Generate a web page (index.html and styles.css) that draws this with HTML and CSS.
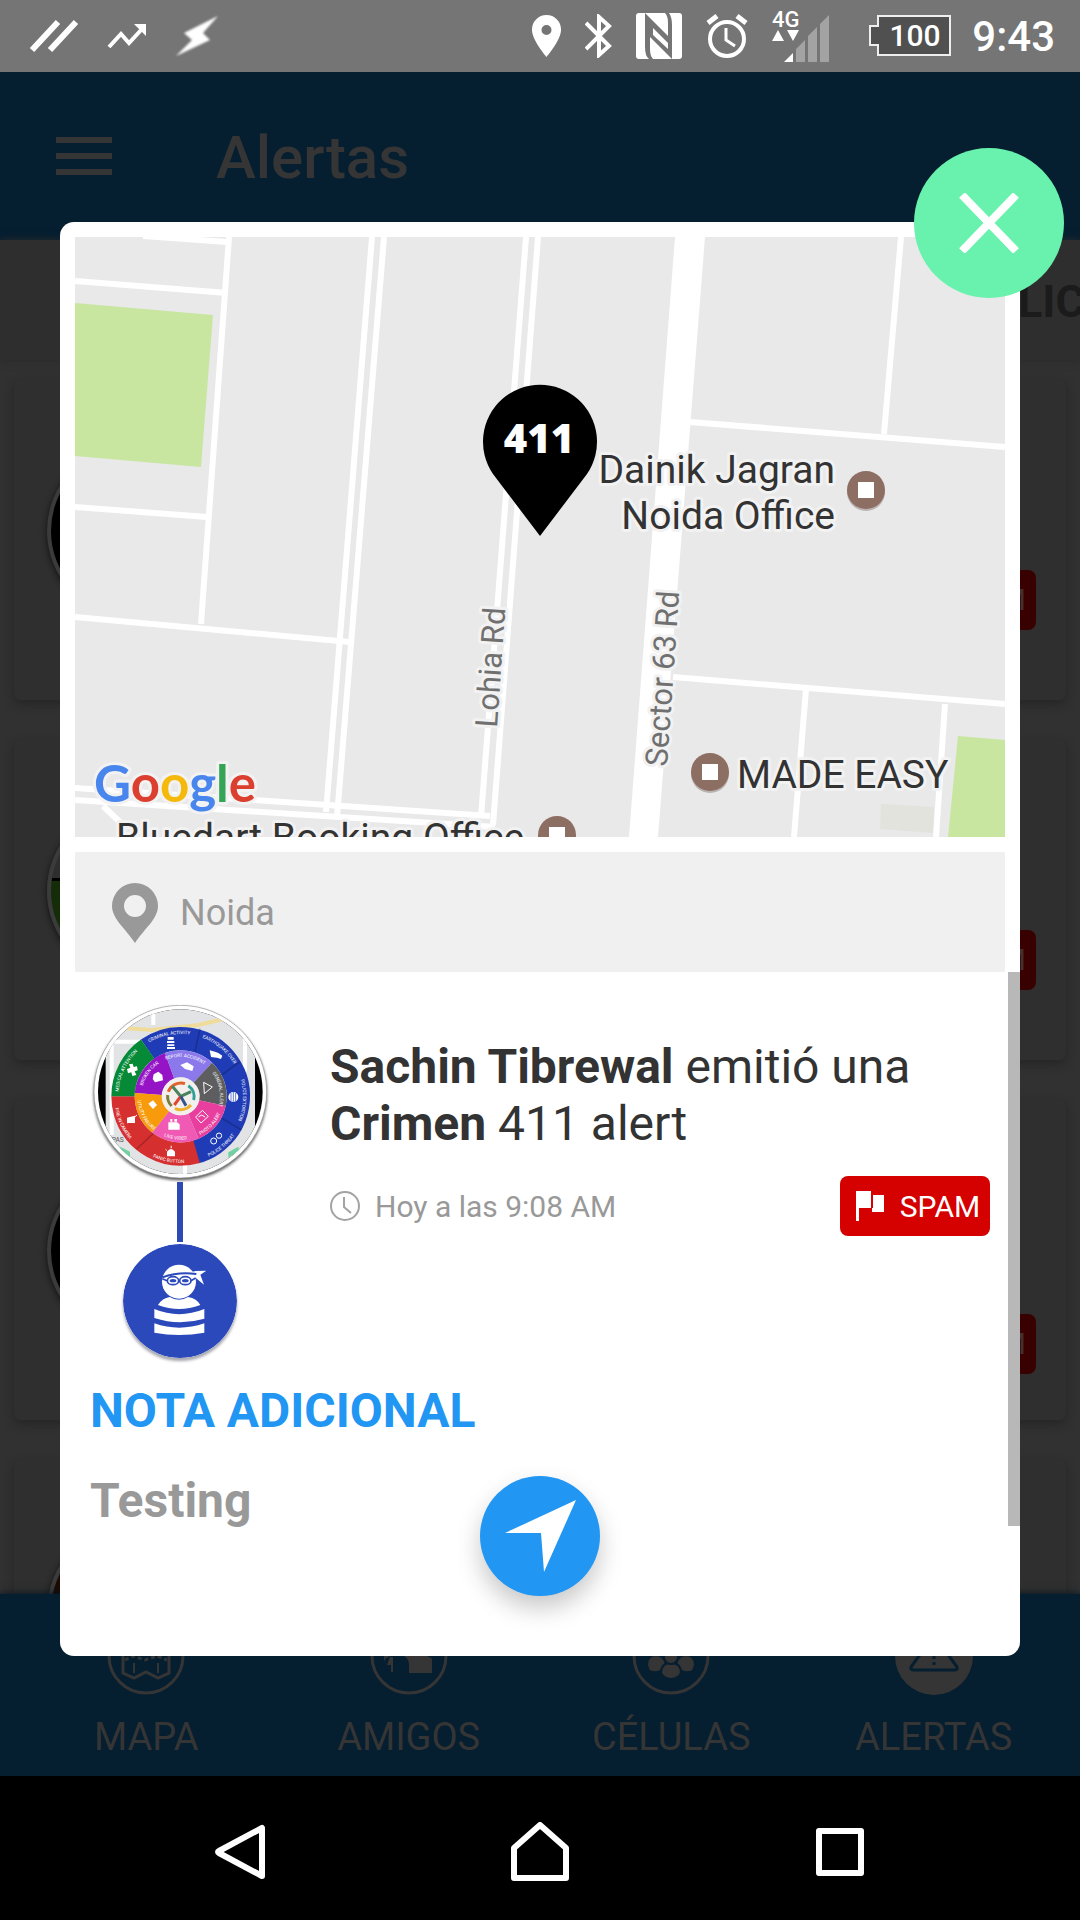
FILE: index.html
```html
<!DOCTYPE html>
<html lang="es">
<head>
<meta charset="utf-8">
<meta name="viewport" content="width=device-width, initial-scale=1">
<title>Alertas</title>
<link rel="stylesheet" href="styles.css">
</head>
<body>
<div class="screen">
  <div class="status">
    <div class="status-left">
      <svg width="50" height="34" viewBox="0 0 50 34" stroke="#fff" stroke-width="6"><path d="M3 31L29 3M21 31L47 3"/></svg>
      <svg width="40" height="26" viewBox="0 0 40 26"><path d="M2 24L14 11L22 20L35 6" fill="none" stroke="#fff" stroke-width="4"/><path d="M27 1H39V13Z" fill="#fff"/></svg>
      <svg class="bolt" width="44" height="42" viewBox="0 0 44 42"><path d="M43 1L28 18L35 25L1 41L17 25L9 18Z" fill="#fff"/></svg>
    </div>
    <div class="status-right">
      <svg width="29" height="42" viewBox="0 0 29 42"><path fill="#fff" fill-rule="evenodd" d="M14.500 0A14.500 14.500 0 0 0 0 15C0 25 14.500 42 14.500 42S29 25 29 15A14.500 14.500 0 0 0 14.500 0ZM14.500 10A5 5 0 1 1 14.500 20A5 5 0 1 1 14.500 10Z"/></svg>
      <svg width="27" height="44" viewBox="0 0 27 44"><path fill="none" stroke="#fff" stroke-width="4" d="M1 9L24 32L14 41V3L24 12L1 35"/></svg>
      <svg width="46" height="46" viewBox="0 0 46 46"><rect width="46" height="46" rx="3" fill="#fff"/><path fill="#757575" d="M9 0L32 23V10Q32 3 29 0H33Q36 4 36 12V46L14 24V36Q14 43 17 46H13Q9 43 9 34Z"/><path fill="#fff" d="M17 22L32 36V30L17 15Z"/></svg>
      <svg width="42" height="44" viewBox="0 0 42 44" fill="none" stroke="#fff"><circle cx="21" cy="25" r="17" stroke-width="4"/><path d="M2 9L11 2M40 9L31 2" stroke-width="5"/><path d="M20 14V26L29 32" stroke-width="3"/></svg>
      <svg width="58" height="54" viewBox="0 0 58 54"><text x="0" y="18" class="net">4G</text><path d="M0 32L6 21L12 32ZM15 21H27L21 32Z" fill="#fff"/><path d="M12 53L21 44V53Z" fill="#fff"/><path d="M24 53V40L33 31V53ZM36 53V27L45 18V53ZM48 53V15L57 6V53Z" fill="#a3a3a3"/></svg>
      <svg class="battery" width="82" height="42" viewBox="0 0 82 42"><path d="M9 1H81V40H9V30H1V11H9Z" fill="#505050" stroke="#eee" stroke-width="2"/><text x="46" y="31" text-anchor="middle" class="charge">100</text></svg>
      <span class="clock">9:43</span>
    </div>
  </div>

  <header class="appbar">
    <button class="menu" aria-label="Menú"><span></span><span></span><span></span></button>
    <h1>Alertas</h1>
  </header>
  <div class="tabs"><span class="tab">LIC</span></div>

  <main class="feed">
    <div class="card"><span class="disc"></span><span class="tag">SPAM</span></div>
    <div class="card"><span class="disc disc-green"></span><span class="tag">SPAM</span></div>
    <div class="card"><span class="disc"></span><span class="tag tag-low">SPAM</span></div>
    <div class="card"><span class="disc disc-brown"></span></div>
  </main>

  <nav class="bottomnav">
    <a href="#mapa">
      <svg width="78" height="78" viewBox="0 0 78 78" fill="none" stroke="#353535" stroke-width="3"><circle cx="39" cy="39" r="37"/><path d="M16 24L27 28L39 22L51 28L62 22V56L51 61L39 55L27 61L16 56Z"/><path d="M27 46V56M51 46V56" stroke-width="2"/><path d="M18 43L26 39L38 43L50 39L60 43" stroke-dasharray="4 3"/></svg>
      MAPA</a>
    <a href="#amigos">
      <svg width="78" height="78" viewBox="0 0 78 78"><circle cx="39" cy="39" r="37" fill="none" stroke="#353535" stroke-width="3"/><path fill="#353535" d="M14 44Q16 38 30 38Q39 39 39 48V56H62V42Q58 38 50 38L30 30L14 38ZM20 40H23V55H21V48H17Z"/></svg>
      AMIGOS</a>
    <a href="#celulas">
      <svg width="78" height="78" viewBox="0 0 78 78"><circle cx="39" cy="39" r="37" fill="none" stroke="#353535" stroke-width="3"/><g fill="#353535" stroke="#051e30" stroke-width="2"><path d="M15 48Q15 38 25 38Q34 40 34 50Q26 58 17 54ZM63 48Q63 38 53 38Q44 40 44 50Q52 58 61 54Z"/><path d="M29 56Q29 46 39 46Q49 46 49 56Q46 62 39 62Q32 62 29 56Z"/><circle cx="39" cy="40" r="7"/></g></svg>
      CÉLULAS</a>
    <a href="#alertas">
      <svg width="78" height="78" viewBox="0 0 78 78"><circle cx="39" cy="39" r="39" fill="#353535"/><path d="M39 18L62 50Q63 53 59 53H19Q15 53 16 50Z" fill="none" stroke="#051e30" stroke-width="3"/><path d="M39 28V42M39 45V48" stroke="#051e30" stroke-width="3"/></svg>
      ALERTAS</a>
  </nav>

  <div class="sysnav">
    <button aria-label="Atrás"><svg width="60" height="60" viewBox="0 0 60 60"><path d="M52 6V54L9 31Q7 30 9 29Z"/></svg></button>
    <button aria-label="Inicio"><svg width="60" height="60" viewBox="0 0 60 60"><path d="M4 56V26L30 3L56 26V56Z"/></svg></button>
    <button aria-label="Recientes"><svg width="60" height="60" viewBox="0 0 60 60"><path d="M9 9H51V51H9Z"/></svg></button>
  </div>

  <div class="overlay">
    <section class="dialog" role="dialog" aria-label="Detalle de la alerta">
      <button class="close" aria-label="Cerrar"><svg width="60" height="60" viewBox="0 0 60 60"><path d="M3 2L57 58M57 2L3 58" stroke="#fff" stroke-width="8"/></svg></button>

      <svg class="map" viewBox="0 0 930 600" preserveAspectRatio="xMidYMid slice" role="img" aria-label="Mapa de Noida">
        <rect width="930" height="600" fill="#e9e9e9"/>
        <g fill="#c8e6a0"><path d="M0 66L138 78L126 230L0 219ZM883 499L930 503V600H873Z"/></g>
        <path d="M806 567L859 570L858 596L805 592Z" fill="#e2e3dc"/>
        <path d="M600 0H630L583 600H554Z" fill="#fff"/>
        <g class="roads">
          <path d="M154 0L126 387M68 -1L152 5M0 44L152 56M0 270L132 280M0 380L275 405"/>
          <path d="M297 0L251 575M309 0L262 580M451 0L406 580M463 0L418 588"/>
          <path d="M0 551L415 579M0 563L420 590M28 569L48 588"/>
          <path d="M615 185L930 210M826 0L809 197M598 440L930 467M731 452L719 600M870 467L861 600"/>
        </g>
        <g class="road-name">
          <text transform="translate(422 491) rotate(-86)">Lohia Rd</text>
          <text transform="translate(592 530) rotate(-86)">Sector 63 Rd</text>
        </g>
        <g class="place">
          <text x="760" y="246" text-anchor="end">Dainik Jagran</text>
          <text x="760" y="292" text-anchor="end">Noida Office</text>
          <text x="662" y="551">MADE EASY</text>
          <text x="41" y="614">Bluedart Booking Office</text>
        </g>
        <g fill="#b9b4b2"><circle cx="791" cy="255" r="19"/><circle cx="635" cy="537" r="19"/></g>
        <g fill="#8d6e63"><circle cx="791" cy="253" r="19"/><circle cx="635" cy="535" r="19"/><circle cx="482" cy="598" r="19"/></g>
        <path d="M783 245h16v16h-16zM627 527h16v16h-16zM474 590h16v16h-16z" fill="#fff"/>
        <path d="M465 299L418 237A57 57 0 1 1 512 237Z" fill="#000"/>
        <text x="464" y="216" text-anchor="middle" class="pin-label">411</text>
        <text x="19" y="565" class="brand"><tspan fill="#4885ed">G</tspan><tspan fill="#db3f2f">o</tspan><tspan fill="#f4b90b">o</tspan><tspan fill="#4885ed">g</tspan><tspan fill="#35a555">l</tspan><tspan fill="#db3f2f">e</tspan></text>
      </svg>

      <div class="place-bar">
        <svg width="46" height="60" viewBox="0 0 46 60"><path fill="#999" fill-rule="evenodd" d="M23 0A23 23 0 0 0 0 23C0 36 14 46 23 60C32 46 46 36 46 23A23 23 0 0 0 23 0ZM23 12A11 11 0 1 1 23 34A11 11 0 1 1 23 12Z"/></svg>
        <span>Noida</span>
      </div>

      <div class="detail">
        <div class="alert">
          <div class="people">
            <svg class="avatar" width="190" height="187" viewBox="0 0 570 561">
              <defs>
                <clipPath id="photo"><circle cx="286" cy="290" r="247"/></clipPath>
                <path id="cwOuter" d="M100 304A187 187 0 1 1 474 304A187 187 0 1 1 100 304"/>
                <path id="ccOuter" d="M87 304A200 200 0 1 0 487 304A200 200 0 1 0 87 304"/>
                <path id="cwInner" d="M169 304A118 118 0 1 1 405 304A118 118 0 1 1 169 304"/>
                <path id="ccInner" d="M157 304A130 130 0 1 0 417 304A130 130 0 1 0 157 304"/>
              </defs>
              <circle class="avatar-ring" cx="286" cy="290" r="259"/>
              <g clip-path="url(#photo)">
                <rect width="570" height="561"/>
                <rect x="62" width="448" height="561" fill="#e2e3e5"/>
                <path d="M62 95L200 105L340 90L510 50" fill="none" stroke="#f0dc9a" stroke-width="12"/>
                <path d="M205 30V90M62 140H190M80 140V420M480 100V230M300 510V561" fill="none" stroke="#fff" stroke-width="12"/>
                <path d="M105 455L135 470V490L108 470ZM460 455L430 472V488L462 468Z" fill="#6fd0a0"/>
                <text x="80" y="440" class="town">PAS</text>
              </g>
              <g fill="none" stroke-width="70">
                <circle cx="287" cy="304" r="173" pathLength="360" stroke="#1f3cb6" stroke-dasharray="200 360" transform="rotate(235 287 304)"/>
                <circle cx="287" cy="304" r="173" pathLength="360" stroke="#d52f30" stroke-dasharray="106 360" transform="rotate(74 287 304)"/>
                <circle cx="287" cy="304" r="173" pathLength="360" stroke="#068a38" stroke-dasharray="55 360" transform="rotate(180 287 304)"/>
              </g>
              <g fill="none" stroke-width="82">
                <circle cx="287" cy="304" r="97" pathLength="360" stroke="#9414c6" stroke-dasharray="66 360" transform="rotate(184 287 304)"/>
                <circle cx="287" cy="304" r="97" pathLength="360" stroke="#8b79ec" stroke-dasharray="63 360" transform="rotate(250 287 304)"/>
                <circle cx="287" cy="304" r="97" pathLength="360" stroke="#5e5e60" stroke-dasharray="59 360" transform="rotate(313 287 304)"/>
                <circle cx="287" cy="304" r="97" pathLength="360" stroke="#e83f9f" stroke-dasharray="55 360" transform="rotate(12 287 304)"/>
                <circle cx="287" cy="304" r="97" pathLength="360" stroke="#f05ab4" stroke-dasharray="61 360" transform="rotate(67 287 304)"/>
                <circle cx="287" cy="304" r="97" pathLength="360" stroke="#f79a0c" stroke-dasharray="56 360" transform="rotate(128 287 304)"/>
              </g>
              <path d="M330 170L345 100M410 240L465 200M410 370L470 405M205 415L155 462" stroke="#000" stroke-opacity=".2" stroke-width="5"/>
              <circle cx="287" cy="304" r="57" fill="#f3efec"/>
              <g fill="none" stroke-width="9"><path d="M250 290A40 40 0 0 1 300 266" stroke="#e0632e"/><path d="M310 272A40 40 0 0 1 326 315" stroke="#2f9f9a"/><path d="M318 330A40 40 0 0 1 270 340" stroke="#efb02b"/><path d="M260 333A40 40 0 0 1 248 300" stroke="#7a7f3a"/><path d="M287 304L262 274M287 304L318 290" stroke="#49845f"/><path d="M287 304L268 330" stroke="#e0472e"/><path d="M287 304L303 332" stroke="#34548a"/></g>
              <g class="wheel-text">
                <text><textPath href="#cwOuter" startOffset="7%">MEDICAL ATTENTION</textPath></text>
                <text><textPath href="#cwOuter" startOffset="22%">CRIMINAL ACTIVITY</textPath></text>
                <text><textPath href="#cwOuter" startOffset="36%">EARTHQUAKE OVER</textPath></text>
                <text><textPath href="#cwOuter" startOffset="51%">POLICE EXTORTION</textPath></text>
                <text><textPath href="#ccOuter" startOffset="36%">POLICE THREAT</textPath></text>
                <text><textPath href="#ccOuter" startOffset="22%">PANIC BUTTON</textPath></text>
                <text><textPath href="#ccOuter" startOffset="7%">FIRE IN CAMERA</textPath></text>
                <text><textPath href="#cwInner" startOffset="10%">BROKEN CAR</textPath></text>
                <text><textPath href="#cwInner" startOffset="27%">REPORT ACCIDENT</textPath></text>
                <text><textPath href="#cwInner" startOffset="47%">GENERAL ALERT</textPath></text>
                <text><textPath href="#ccInner" startOffset="38%">PHOTO ALERT</textPath></text>
                <text><textPath href="#ccInner" startOffset="23%">LIVE VIDEO</textPath></text>
                <text><textPath href="#ccInner" startOffset="8%">UTILITY FAILURE</textPath></text>
              </g>
              <g fill="#fff">
                <path d="M126 222L136 218L132 208L143 206L146 216L156 214L158 226L149 229L154 240L142 243L139 232L129 235Z"/>
                <path d="M248 126H266V134H248ZM246 138H268V144H246ZM247 148H268V153H247ZM246 156H270V162H246Z"/>
                <path d="M374 166L390 170L400 174L412 182L408 192L396 188L378 186Z"/>
                <circle cx="445" cy="306" r="15"/>
                <path d="M206 238L220 230L232 240L234 256L210 262L203 252Z"/>
                <path d="M286 210L306 202L326 214L322 228L300 222Z"/>
                <path d="M190 326L204 316L216 330L204 342Z"/>
                <path d="M250 382H276L284 388V404H250ZM256 372H262V380H256ZM268 372H276V380H268Z"/>
                <path d="M246 484H270V470Q258 454 246 470ZM257 452H260V460H257ZM240 460L246 466L244 468Z"/>
                <path d="M126 368L150 362V384H126Z"/>
              </g>
              <g fill="none" stroke="#fff" stroke-width="3"><path d="M356 262L382 276L358 296ZM332 366L352 346L370 364L348 384ZM340 366L350 360L360 366M128 384L156 360"/><circle cx="386" cy="438" r="9"/><circle cx="402" cy="422" r="8"/></g>
              <path d="M445 290V322M438 294V318M452 294V318" stroke="#1f3cb6" stroke-width="2"/>
            </svg>
            <span class="link"></span>
            <svg class="kind" width="114" height="114" viewBox="0 0 342 342">
              <circle cx="171" cy="171" r="171" fill="#2b49bb"/>
              <g fill="#fff"><circle cx="168" cy="113" r="51"/><path d="M205 84L218 81L250 80L232 92L243 122L214 98Z"/></g>
              <path d="M118 100Q168 82 220 90" fill="none" stroke="#2b49bb" stroke-width="6"/>
              <g fill="#fff" stroke="#2b49bb" stroke-width="5"><path d="M118 104L132 110M204 110L218 102"/><ellipse cx="150" cy="110" rx="17" ry="12"/><ellipse cx="187" cy="110" rx="17" ry="12"/></g>
              <g fill="#2b49bb"><ellipse cx="150" cy="110" rx="10" ry="5"/><ellipse cx="187" cy="110" rx="10" ry="5"/></g>
              <path fill="#fff" d="M105 183Q118 162 140 159Q168 176 195 159Q222 164 232 183Q168 207 105 183ZM94 195Q168 226 244 195V224Q168 246 94 222ZM94 238Q168 264 244 238V266Q168 280 94 266Z"/>
            </svg>
          </div>
          <div class="info">
            <p class="headline"><b>Sachin Tibrewal</b> emitió una <b>Crimen</b> 411 alert</p>
            <div class="meta">
              <svg width="30" height="30" viewBox="0 0 30 30" fill="none" stroke="#a3a3a3" stroke-width="2"><circle cx="15" cy="15" r="14"/><path d="M14 6V16L21 22"/></svg>
              <span>Hoy a las 9:08 AM</span>
              <button class="spam"><svg width="28" height="30" viewBox="0 0 28 30" fill="#fff"><path d="M0 0H15V17H3V30H0ZM17 4H28V21H16V17H17Z"/></svg>SPAM</button>
            </div>
          </div>
        </div>
        <h2>NOTA ADICIONAL</h2>
        <p class="note">Testing</p>
        <span class="thumb"></span>
      </div>
      <button class="go" aria-label="Ir a la ubicación"><svg width="120" height="120" viewBox="0 0 120 120"><path d="M96 24L25 57H61L64 96Z" fill="#fff"/></svg></button>
    </section>
  </div>
</div>
</body>
</html>
```
FILE: styles.css
```css
* { box-sizing: border-box; }

body {
  margin: 0;
  font-family: Roboto, "Noto Sans", sans-serif;
}

h1, h2, p { margin: 0; }

svg { display: block; flex-shrink: 0; }

button {
  border: 0;
  padding: 0;
  background: none;
  font-family: inherit;
}

.screen {
  position: relative;
  display: flex;
  flex-direction: column;
  height: 100vh;
  overflow: hidden;
  background: #313131;
}

/* System status bar */
.status {
  display: flex;
  flex-shrink: 0;
  justify-content: space-between;
  align-items: center;
  height: 72px;
  padding: 0 25px 0 29px;
  background: #757575;
  color: #fff;
}
.status-left { display: flex; align-items: center; gap: 28px; }
.status-right { display: flex; align-items: center; gap: 24px; }
.bolt { filter: blur(1px); }
.battery { margin: 0 -3px 0 15px; }
.net { font-size: 22px; font-weight: 500; fill: #fff; }
.charge { font-size: 30px; font-weight: 500; fill: #fff; }
.clock { font-size: 42px; font-weight: 500; line-height: 72px; padding-top: 2px; }

/* Dimmed page behind the dialog */
.appbar {
  display: flex;
  flex-shrink: 0;
  align-items: center;
  gap: 104px;
  height: 168px;
  padding: 0 56px;
  background: #051e30;
  color: #353535;
}
.menu { display: flex; flex-direction: column; gap: 10px; }
.menu span { width: 56px; height: 6px; background: #353535; }
.appbar h1 { padding-top: 4px; font-size: 60px; font-weight: 500; line-height: 72px; }

.tabs {
  display: flex;
  flex-shrink: 0;
  justify-content: flex-end;
  align-items: center;
  height: 120px;
  padding-top: 4px;
  background: #2e2e2e;
  box-shadow: 0 0 8px #292929;
}
.tab {
  width: 62px;
  overflow: hidden;
  font-size: 45px;
  font-weight: 700;
  line-height: 60px;
  color: #1b1b1b;
  white-space: nowrap;
}

.feed {
  display: flex;
  flex: 1;
  flex-direction: column;
  gap: 40px;
  min-height: 0;
  padding: 20px 14px 0;
  overflow: hidden;
}
.card {
  display: flex;
  flex-shrink: 0;
  justify-content: space-between;
  height: 320px;
  padding: 64px 30px 0 33px;
  border-radius: 6px;
  background: #2f2f2f;
  box-shadow: 0 4px 10px #262626;
}
.disc {
  width: 174px;
  height: 174px;
  border: 4px solid #3b3b3b;
  border-radius: 50%;
  background: #000;
  box-shadow: 0 2px 6px #111;
}
.disc-green { background: linear-gradient(#2e2e2e 42%, #000 42%, #000 44%, #142c08 44%); }
.disc-brown { background: #1c0c04; }
.tag {
  height: 60px;
  margin-top: 126px;
  padding: 0 10px;
  border-radius: 8px;
  background: #380000;
  font-size: 30px;
  line-height: 60px;
  color: #453030;
}
.tag-low { margin-top: 150px; }

.bottomnav {
  display: grid;
  flex-shrink: 0;
  grid-template-columns: repeat(4, 1fr);
  height: 182px;
  padding: 23px 15px 0;
  background: #051e30;
  box-shadow: 0 0 8px #02131f;
}
.bottomnav a {
  display: flex;
  flex-direction: column;
  align-items: center;
  gap: 20px;
  font-size: 38px;
  line-height: 44px;
  color: #353535;
  text-decoration: none;
}

.sysnav {
  display: grid;
  flex-shrink: 0;
  grid-template-columns: repeat(3, 1fr);
  align-items: center;
  height: 144px;
  padding: 8px 90px 0;
  background: #000;
}
.sysnav button { display: flex; justify-content: center; }
.sysnav path {
  fill: none;
  stroke: #fff;
  stroke-width: 6;
  stroke-linejoin: round;
}

/* Alert dialog */
.overlay {
  position: absolute;
  inset: 72px 0 144px;
  display: flex;
  padding: 150px 60px 120px;
}
.dialog {
  position: relative;
  display: flex;
  flex: 1;
  flex-direction: column;
  min-width: 0;
  padding-top: 15px;
  border-radius: 14px;
  background: #fff;
}
.close {
  position: absolute;
  top: -74px;
  right: -44px;
  display: flex;
  justify-content: center;
  align-items: center;
  width: 150px;
  height: 150px;
  border-radius: 50%;
  background: #68f2ad;
}
.map {
  height: 600px;
  margin: 0 15px;
}
.roads { fill: none; stroke: #fff; stroke-width: 6; }
.road-name text, .place text, .brand {
  paint-order: stroke;
  stroke: #f2f2f2;
  stroke-width: 6;
  stroke-linejoin: round;
}
.road-name { font-size: 31px; fill: #707070; }
.place { font-size: 39px; fill: #333; }
.pin-label { font: 800 40px "Open Sans", sans-serif; fill: #fff; }
.brand { font: 700 51px Lato, sans-serif; }

.place-bar {
  display: flex;
  flex-shrink: 0;
  align-items: center;
  gap: 22px;
  height: 120px;
  margin: 15px 15px 0;
  padding: 2px 37px 0;
  background: #f0f0f0;
  font-size: 36px;
  color: #999;
}

.detail {
  position: relative;
  flex: 1;
  padding: 0 30px 0 15px;
}
.alert { display: flex; gap: 45px; }
.people {
  display: flex;
  flex-direction: column;
  align-items: center;
  width: 210px;
  padding-top: 23px;
}
.avatar-ring {
  fill: #fff;
  stroke: #999;
  stroke-width: 2px;
  filter: drop-shadow(0 6px 5px #555);
}
.town { font-size: 20px; fill: #555; }
.wheel-text { font-size: 14px; fill: #fff; text-anchor: middle; }
.link {
  width: 6px;
  height: 60px;
  margin-bottom: 2px;
  background: #2d49b5;
}
.kind { border-radius: 50%; box-shadow: 0 3px 3px #a5a5ad; }

.info { flex: 1; padding-top: 66px; }
.headline { font-size: 48px; line-height: 57px; color: #333; }
.meta {
  display: flex;
  align-items: center;
  gap: 15px;
  margin-top: 24px;
  font-size: 30px;
  color: #999;
}
.spam {
  display: flex;
  justify-content: center;
  align-items: center;
  gap: 16px;
  width: 150px;
  height: 60px;
  margin-left: auto;
  padding-left: 6px;
  border-radius: 8px;
  background: #d50000;
  font-size: 30px;
  color: #fff;
}
.detail h2, .note {
  padding-left: 15px;
  font-size: 48px;
  font-weight: 700;
  line-height: 57px;
}
.detail h2 { margin-top: 24px; color: #2196f3; }
.note { margin-top: 33px; color: #999; }
.thumb {
  position: absolute;
  top: 0;
  right: 0;
  width: 12px;
  height: 81%;
  background: #b8b8b8;
}
.go {
  position: absolute;
  bottom: 60px;
  left: 50%;
  width: 120px;
  height: 120px;
  margin-left: -60px;
  border-radius: 50%;
  background: #2196f3;
  box-shadow: 0 12px 24px #c8c8c8;
}
```
